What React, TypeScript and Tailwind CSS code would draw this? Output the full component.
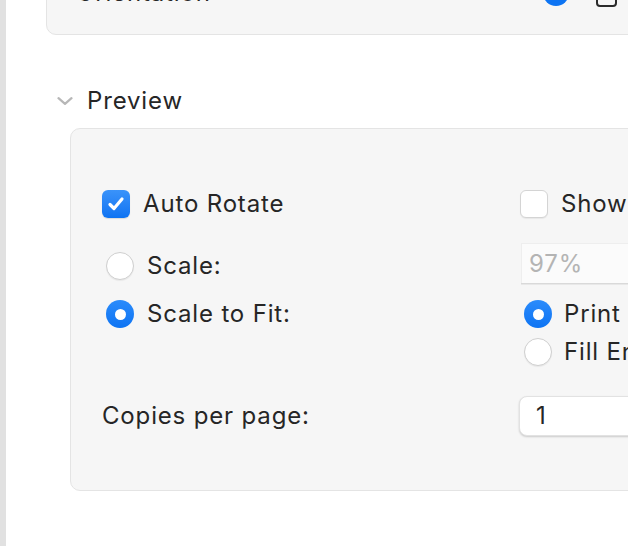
import React from "react";

const font = { fontFamily: "Inter, 'Noto Sans', sans-serif" };

function Checkbox({ checked }: { checked?: boolean }) {
  if (checked) {
    return (
      <div className="w-[28px] h-[28px] rounded-[6px] bg-gradient-to-b from-[#3a93fa] to-[#0d73f2] flex items-center justify-center shrink-0 shadow-[0_1px_1px_rgba(0,0,0,0.12)]">
        <svg width="18" height="16" viewBox="0 0 18 16" fill="none">
          <path d="M3 8.5 L7 12.5 L15 3" stroke="white" strokeWidth="3.2" strokeLinecap="round" strokeLinejoin="round" />
        </svg>
      </div>
    );
  }
  return (
    <div className="w-[28px] h-[28px] rounded-[6px] bg-white border border-[#d4d4d4] shrink-0 shadow-[0_1px_1px_rgba(0,0,0,0.06)]" />
  );
}

function Radio({ checked }: { checked?: boolean }) {
  if (checked) {
    return (
      <div className="w-[28px] h-[28px] rounded-full bg-gradient-to-b from-[#2a8bfb] to-[#0d74f3] flex items-center justify-center shrink-0">
        <div className="w-[11px] h-[11px] rounded-full bg-white" />
      </div>
    );
  }
  return (
    <div className="w-[28px] h-[28px] rounded-full bg-white border border-[#cfcfcf] shrink-0 shadow-[0_1px_1px_rgba(0,0,0,0.06)]" />
  );
}

export default function App() {
  return (
    <div
      className="w-[628px] h-[546px] overflow-hidden bg-white flex text-[#262626] text-[24px] tracking-[0.035em] whitespace-nowrap"
      style={font}
    >
      <div className="w-[6px] h-full bg-[#e1e1e1] shrink-0" />
      <div className="flex flex-col flex-1 min-w-0">
        {/* Top card (Orientation) */}
        <div className="ml-[40px] mt-[-40px] w-[700px] h-[75px] bg-[#f6f6f6] border border-[#e4e4e4] rounded-[10px] shrink-0 flex items-center pl-[29px] pt-[18px] pb-[28px] box-border">
          <div className="w-[467px] leading-none shrink-0">Orientation</div>
          <div className="w-[26px] h-[26px] rounded-full bg-[#0d74f3] shrink-0" />
          <div className="ml-[27px] w-[21px] h-[28px] rounded-[4px] border-[2px] border-[#2b2b2b] shrink-0" />
        </div>

        {/* Preview header */}
        <div className="ml-[51px] mt-[53px] flex items-center h-[26px]">
          <svg width="16" height="8" viewBox="0 0 16 8" fill="none" className="mr-[14px]">
            <path d="M1.5 1.2 L8 6.8 L14.5 1.2" stroke="#b7b7b7" strokeWidth="2.2" strokeLinecap="round" strokeLinejoin="round" />
          </svg>
          <span>Preview</span>
        </div>

        {/* Preview card */}
        <div className="ml-[64px] mt-[14px] w-[700px] bg-[#f6f6f6] border border-[#e4e4e4] rounded-[10px] pt-[61px] pb-[54px] pl-[31px]">
          <div className="flex items-center h-[28px]">
            <div className="w-[418px] shrink-0 flex items-center">
              <Checkbox checked />
              <span className="ml-[13px]">Auto Rotate</span>
            </div>
            <div className="flex items-center">
              <Checkbox />
              <span className="ml-[13px]">Show Border</span>
            </div>
          </div>

          <div className="flex items-center h-[40px] mt-[25px]">
            <div className="w-[419px] shrink-0 flex items-center pl-[4px] mt-[5px]">
              <Radio />
              <span className="ml-[13px]">Scale:</span>
            </div>
            <div className="w-[160px] h-[40px] shrink-0 bg-[#fbfbfb] border-t border-l border-[#eeeeee] shadow-[0_1.5px_0_#d9d9d9] flex items-center pl-[7px] text-[#b4b4b4]">
              97%
            </div>
          </div>

          <div className="flex items-center h-[28px] mt-[17px]">
            <div className="w-[418px] shrink-0 flex items-center pl-[4px]">
              <Radio checked />
              <span className="ml-[13px]">Scale to Fit:</span>
            </div>
            <div className="flex items-center pl-[4px]">
              <Radio checked />
              <span className="ml-[12px]">Print Entire Image</span>
            </div>
          </div>

          <div className="flex items-center h-[28px] mt-[10px]">
            <div className="w-[418px] shrink-0" />
            <div className="flex items-center pl-[4px]">
              <Radio />
              <span className="ml-[12px]">Fill Entire Paper</span>
            </div>
          </div>

          <div className="flex items-center h-[40px] mt-[30px]">
            <div className="w-[417px] shrink-0 flex items-center">
              <span>Copies per page:</span>
            </div>
            <div className="w-[160px] h-[40px] shrink-0 bg-white rounded-[8px] border border-[#e2e2e2] shadow-[0_1px_2px_rgba(0,0,0,0.18)] flex items-center pl-[16px]">
              1
            </div>
          </div>
        </div>
      </div>
    </div>
  );
}
